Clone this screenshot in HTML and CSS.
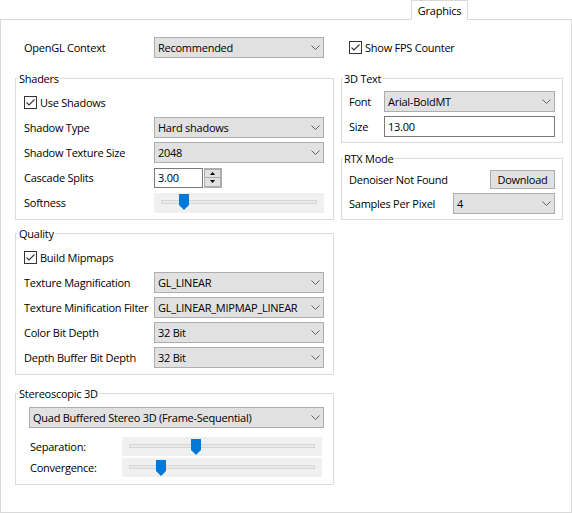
FILE: index.html
```html
<!DOCTYPE html>
<html lang="en">
<head>
    <meta charset="UTF-8">
    <meta name="viewport" content="width=device-width, initial-scale=1.0">
    <title>Graphics</title>
    <link rel="stylesheet" href="styles.css">
</head>
<body>
    <div class="tabbar">
        <div class="tab">Graphics</div>
    </div>

    <div class="pane">
        <!-- left column -->
        <div class="col left">
            <div class="row top">
                <div class="lbl">OpenGL Context</div>
                <div class="combo"><span>Recommended</span><svg class="chev" width="9" height="5"><polyline points="0.5,0.5 4.5,4.5 8.5,0.5"/></svg></div>
            </div>

            <fieldset class="group">
                <legend>Shaders</legend>
                <div class="row chkrow">
                    <span class="chk"><svg width="11" height="11"><polyline points="1.5,5.5 4,8 9.5,2.5"/></svg></span>Use Shadows
                </div>
                <div class="row">
                    <div class="lbl">Shadow Type</div>
                    <div class="combo"><span>Hard shadows</span><svg class="chev" width="9" height="5"><polyline points="0.5,0.5 4.5,4.5 8.5,0.5"/></svg></div>
                </div>
                <div class="row">
                    <div class="lbl">Shadow Texture Size</div>
                    <div class="combo"><span>2048</span><svg class="chev" width="9" height="5"><polyline points="0.5,0.5 4.5,4.5 8.5,0.5"/></svg></div>
                </div>
                <div class="row">
                    <div class="lbl">Cascade Splits</div>
                    <div class="spin">
                        <div class="spin-input">3.00</div>
                        <div class="spin-btns">
                            <div class="spin-btn"><svg width="5" height="3"><polygon points="0,3 5,3 2.5,0"/></svg></div>
                            <div class="spin-btn"><svg width="5" height="3"><polygon points="0,0 5,0 2.5,3"/></svg></div>
                        </div>
                    </div>
                </div>
                <div class="row">
                    <div class="lbl">Softness</div>
                    <div class="slider wide">
                        <div class="track"></div>
                        <svg class="thumb" style="left:25px" width="10" height="16"><path d="M0 0H10V11L5 16L0 11Z"/></svg>
                    </div>
                </div>
            </fieldset>

            <fieldset class="group quality">
                <legend>Quality</legend>
                <div class="row chkrow">
                    <span class="chk"><svg width="11" height="11"><polyline points="1.5,5.5 4,8 9.5,2.5"/></svg></span>Build Mipmaps
                </div>
                <div class="row">
                    <div class="lbl">Texture Magnification</div>
                    <div class="combo"><span>GL_LINEAR</span><svg class="chev" width="9" height="5"><polyline points="0.5,0.5 4.5,4.5 8.5,0.5"/></svg></div>
                </div>
                <div class="row">
                    <div class="lbl">Texture Minification Filter</div>
                    <div class="combo"><span>GL_LINEAR_MIPMAP_LINEAR</span><svg class="chev" width="9" height="5"><polyline points="0.5,0.5 4.5,4.5 8.5,0.5"/></svg></div>
                </div>
                <div class="row">
                    <div class="lbl">Color Bit Depth</div>
                    <div class="combo"><span>32 Bit</span><svg class="chev" width="9" height="5"><polyline points="0.5,0.5 4.5,4.5 8.5,0.5"/></svg></div>
                </div>
                <div class="row">
                    <div class="lbl">Depth Buffer Bit Depth</div>
                    <div class="combo"><span>32 Bit</span><svg class="chev" width="9" height="5"><polyline points="0.5,0.5 4.5,4.5 8.5,0.5"/></svg></div>
                </div>
            </fieldset>

            <fieldset class="group stereo">
                <legend>Stereoscopic 3D</legend>
                <div class="row">
                    <div class="combo"><span>Quad Buffered Stereo 3D (Frame-Sequential)</span><svg class="chev" width="9" height="5"><polyline points="0.5,0.5 4.5,4.5 8.5,0.5"/></svg></div>
                </div>
                <div class="sliders">
                    <div class="row srow">
                        <div class="slbl">Separation:</div>
                        <div class="slider">
                            <div class="track"></div>
                            <svg class="thumb" style="left:69px" width="10" height="16"><path d="M0 0H10V11L5 16L0 11Z"/></svg>
                        </div>
                    </div>
                    <div class="row srow">
                        <div class="slbl">Convergence:</div>
                        <div class="slider">
                            <div class="track"></div>
                            <svg class="thumb" style="left:34px" width="10" height="16"><path d="M0 0H10V11L5 16L0 11Z"/></svg>
                        </div>
                    </div>
                </div>
            </fieldset>
        </div>

        <!-- right column -->
        <div class="col right">
            <div class="row top fps">
                <span class="chk"><svg width="11" height="11"><polyline points="1.5,5.5 4,8 9.5,2.5"/></svg></span>Show FPS Counter
            </div>

            <fieldset class="group text3d">
                <legend>3D Text</legend>
                <div class="row">
                    <div class="lbl">Font</div>
                    <div class="combo"><span>Arial-BoldMT</span><svg class="chev" width="9" height="5"><polyline points="0.5,0.5 4.5,4.5 8.5,0.5"/></svg></div>
                </div>
                <div class="row">
                    <div class="lbl">Size</div>
                    <div class="edit">13.00</div>
                </div>
            </fieldset>

            <fieldset class="group rtx">
                <legend>RTX Mode</legend>
                <div class="row">
                    <div class="lbl grow">Denoiser Not Found</div>
                    <div class="btn">Download</div>
                </div>
                <div class="row">
                    <div class="lbl">Samples Per Pixel</div>
                    <div class="combo"><span>4</span><svg class="chev" width="9" height="5"><polyline points="0.5,0.5 4.5,4.5 8.5,0.5"/></svg></div>
                </div>
            </fieldset>
        </div>
    </div>
</body>
</html>
```

FILE: styles.css
```css
* {
    box-sizing: border-box;
}

body {
    margin: 0;
    width: 572px;
    height: 513px;
    background: #fff;
    font-family: "Open Sans", "Noto Sans", sans-serif;
    font-size: 11px;
    letter-spacing: -0.25px;
    color: #000;
}

/* tab strip */
.tabbar {
    height: 19px;
    display: flex;
    justify-content: flex-end;
    padding-right: 104px;
}
.tab {
    position: relative;
    width: 57px;
    height: 20px;
    border: 1px solid #d9d9d9;
    border-bottom: none;
    background: #fff;
    text-align: center;
    line-height: 19px;
}

.pane {
    height: 494px;
    border: 1px solid #d9d9d9;
    display: flex;
    gap: 7px;
    padding: 17px 8px 0 14px;
}
.col.left {
    width: 319px;
}
.col.right {
    width: 222px;
}

.row {
    display: flex;
    align-items: center;
    height: 25px;
}
.row.top {
    height: 21px;
    padding: 0 10px 0 9px;
}
.row.fps {
    padding-left: 8px;
}
.chkrow {
    height: 26px;
}

.lbl {
    width: 130px;
    flex: none;
    white-space: nowrap;
}
.lbl.grow {
    flex: 1;
}

/* group boxes */
.group {
    margin: 13px 0 0;
    padding: 3px 9px 4px 8px;
    border: 1px solid #dcdcdc;
    min-width: 0;
}
.group legend {
    line-height: 15px;
    padding: 0 1px;
    margin-left: -6px;
}
.quality {
    margin-top: 6px;
}
.stereo {
    margin-top: 11px;
    padding: 4px 9px 6px 13px;
}
.stereo legend {
    margin-left: -11px;
}
.text3d {
    padding: 3px 7px 3px 7px;
}
.text3d .lbl {
    width: 35px;
}
.rtx {
    margin-top: 8px;
    padding: 1px 7px 4px 7px;
}
.rtx .row {
    height: 24px;
}
.rtx .lbl {
    width: 104px;
}

/* combo box */
.combo {
    flex: 1;
    height: 21px;
    display: flex;
    align-items: center;
    justify-content: space-between;
    padding: 0 3px 0 3px;
    border: 1px solid #adadad;
    background: #e1e1e1;
    white-space: nowrap;
}
.chev {
    flex: none;
}
.chev polyline {
    fill: none;
    stroke: #606060;
    stroke-width: 1;
}

/* checkbox */
.chk {
    width: 13px;
    height: 13px;
    border: 1px solid #333;
    background: #fff;
    margin-right: 3px;
    display: flex;
    align-items: center;
    justify-content: center;
    flex: none;
}
.chk polyline {
    fill: none;
    stroke: #333;
    stroke-width: 1.1;
}

/* spin box */
.spin {
    display: flex;
    height: 20px;
}
.spin-input {
    width: 49px;
    border: 1px solid #7a7a7a;
    padding-left: 3px;
    line-height: 18px;
    background: #fff;
}
.spin-btns {
    width: 18px;
    display: flex;
    flex-direction: column;
    border: 1px solid #adadad;
    border-left: none;
    margin-left: 1px;
}
.spin-btn {
    flex: 1;
    background: #e1e1e1;
    border: 1px solid #adadad;
    display: flex;
    align-items: center;
    justify-content: center;
}
.spin-btn + .spin-btn {
    border-top: none;
}
.spin-btn polygon {
    fill: #000;
}

/* sliders */
.slider {
    position: relative;
    width: 200px;
    height: 19px;
    background: #f0f0f0;
    padding: 7px 7px 0;
}
.slider.wide {
    flex: 1;
    height: 20px;
}
.track {
    height: 4px;
    border: 1px solid #d6d6d6;
    background: #e7eaea;
}
.thumb {
    position: absolute;
    top: 1px;
}
.slider .thumb path {
    fill: #0078d7;
}
.sliders {
    margin-top: 6px;
    padding-right: 2px;
}
.srow {
    height: 21px;
}
.srow .thumb {
    top: 2px;
}
.slbl {
    flex: 1;
    padding-left: 1px;
}

/* edit and button */
.edit {
    flex: 1;
    height: 21px;
    border: 1px solid #7a7a7a;
    background: #fff;
    padding-left: 3px;
    line-height: 19px;
}
.btn {
    width: 65px;
    height: 19px;
    border: 1px solid #adadad;
    background: #e1e1e1;
    text-align: center;
    line-height: 17px;
}
```
